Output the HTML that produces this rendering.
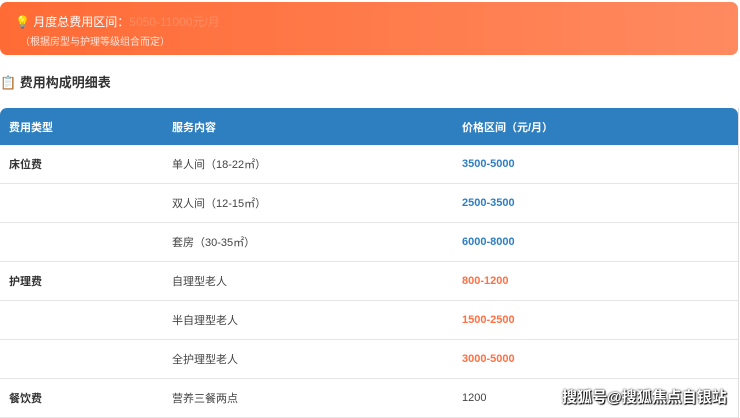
<!DOCTYPE html>
<html><head><meta charset="utf-8"><style>
body{margin:0;width:740px;height:412px;overflow:hidden;background:#fff;font-family:"Liberation Sans","Noto Sans CJK SC",sans-serif;position:relative}
.banner{position:absolute;left:0;top:2px;width:738px;height:53px;border-radius:7px;background:linear-gradient(90deg,#ff6b35,#ff8a60)}
.b1{position:absolute;left:15px;top:11px;font-size:12px;color:#fff}
.b1 span{color:#ff8c60}
.b2{position:absolute;left:20px;top:31px;font-size:10px;color:#ffe4d8}
.title{position:absolute;left:0;top:72px;font-size:13px;font-weight:bold;color:#333}
.table{position:absolute;left:0;top:108px;width:738px;border-right:1px solid #ddd}
.hd{height:37px;background:#2e7fc0;border-radius:7px 7px 0 0;color:#fff;font-weight:bold;font-size:11px;position:relative}
.row{height:38px;border-bottom:1px solid #e6e6e6;position:relative;font-size:11px;color:#444}
.c{position:absolute;top:50%;transform:translateY(-50%)}
.c1{left:9px;font-weight:bold;color:#333}.c2{left:172px}.c3{left:462px;font-weight:bold}
.blue{color:#2e7fc0}.or{color:#ff7043}
.wm{position:absolute;left:562px;top:386px;font-size:15px;font-weight:bold;color:#fff;text-shadow:0 0 2px #000,1px 1px 1px #000}
</style></head><body>
<div class="banner"><div class="b1">💡 月度总费用区间：<span>5050-11000元/月</span></div><div class="b2">（根据房型与护理等级组合而定）</div></div>
<div class="title">📋 费用构成明细表</div>
<div class="table">
<div class="hd"><div class="c c1" style="color:#fff">费用类型</div><div class="c c2">服务内容</div><div class="c c3">价格区间（元/月）</div></div>
<div class="row"><div class="c c1">床位费</div><div class="c c2">单人间（18-22㎡）</div><div class="c c3 blue">3500-5000</div></div>
<div class="row"><div class="c c2">双人间（12-15㎡）</div><div class="c c3 blue">2500-3500</div></div>
<div class="row"><div class="c c2">套房（30-35㎡）</div><div class="c c3 blue">6000-8000</div></div>
<div class="row"><div class="c c1">护理费</div><div class="c c2">自理型老人</div><div class="c c3 or">800-1200</div></div>
<div class="row"><div class="c c2">半自理型老人</div><div class="c c3 or">1500-2500</div></div>
<div class="row"><div class="c c2">全护理型老人</div><div class="c c3 or">3000-5000</div></div>
<div class="row"><div class="c c1">餐饮费</div><div class="c c2">营养三餐两点</div><div class="c c3" style="font-weight:normal">1200</div></div>
</div>
<div class="wm">搜狐号@搜狐焦点自银站</div>
</body></html>
